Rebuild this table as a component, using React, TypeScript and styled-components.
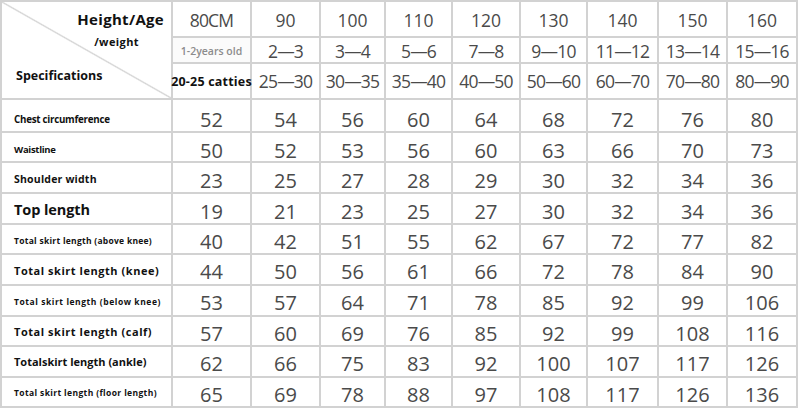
import React from "react";
import styled, { createGlobalStyle } from "styled-components";

const Global = createGlobalStyle`
  html, body { margin: 0; padding: 0; background: #ffffff; }
  body { width: 801px; height: 411px; overflow: hidden; }
`;

const LINE = "#d2d2d2";

const Grid = styled.div`
  display: grid;
  grid-template-columns: 169px 77px 67px 63px 65px 66px 65px 69px 67px 68px;
  grid-template-rows: 34px 24px 34px 31px 28px 29px 29px 28px 29px 29px 28px 29px 28px;
  gap: 2px;
  padding: 2px;
  width: max-content;
  background: ${LINE};
`;

const Corner = styled.div`
  grid-row: 1 / span 3;
  grid-column: 1;
  display: flex;
  flex-direction: column;
  font-family: "Open Sans", "Liberation Sans", sans-serif;
  font-weight: 700;
  color: #111;
  background: linear-gradient(
    to top right,
    #fff calc(50% - 1.3px),
    #d3d3d3 50%,
    #fff calc(50% + 1.3px)
  );
`;

const CornerText = styled.span<{ $size: number; $top: number; $align: "start" | "end"; $side: number; $ls?: number }>`
  font-size: ${(p) => p.$size}px;
  line-height: 1;
  margin-top: ${(p) => p.$top}px;
  align-self: ${(p) => (p.$align === "start" ? "flex-start" : "flex-end")};
  ${(p) => (p.$align === "start" ? `margin-left: ${p.$side}px;` : `margin-right: ${p.$side}px;`)}
  letter-spacing: ${(p) => p.$ls ?? 0}px;
  white-space: nowrap;
`;

const Cell = styled.div<{ $size: number; $shift?: number; $ls?: number }>`
  background: #fff;
  display: flex;
  align-items: center;
  justify-content: center;
  padding-top: ${(p) => p.$shift ?? 0}px;
  box-sizing: border-box;
  font-family: "Open Sans", "Liberation Sans", sans-serif;
  font-size: ${(p) => p.$size}px;
  letter-spacing: ${(p) => p.$ls ?? 0}px;
  color: #4a4a4a;
  white-space: nowrap;
`;

const AgeNote = styled(Cell)`
  font-weight: 600;
  color: #8c8c8c;
  background: #fbfbfb;
`;

const WeightNote = styled(Cell)`
  font-weight: 700;
  color: #111;
`;

const Label = styled.div<{ $size: number; $ls: number; $shift: number }>`
  background: #fff;
  display: flex;
  align-items: center;
  padding-left: 12px;
  padding-top: ${(p) => p.$shift}px;
  box-sizing: border-box;
  font-family: "Open Sans", "Liberation Sans", sans-serif;
  font-weight: 700;
  font-size: ${(p) => p.$size}px;
  letter-spacing: ${(p) => p.$ls}px;
  color: #111;
  white-space: nowrap;
`;

const heights = ["80CM", "90", "100", "110", "120", "130", "140", "150", "160"];
const ages = ["1-2years old", "2—3", "3—4", "5—6", "7—8", "9—10", "11—12", "13—14", "15—16"];
const weights = ["20-25 catties", "25—30", "30—35", "35—40", "40—50", "50—60", "60—70", "70—80", "80—90"];

type Row = { label: string; size: number; ls: number; shift: number; num: number; values: number[] };

const rows: Row[] = [
  { label: "Chest circumference", size: 9.8, ls: -0.27, shift: 7, num: 8, values: [52, 54, 56, 60, 64, 68, 72, 76, 80] },
  { label: "Waistline", size: 9.5, ls: -0.3, shift: 4, num: 6, values: [50, 52, 53, 56, 60, 63, 66, 70, 73] },
  { label: "Shoulder width", size: 10.5, ls: 0.2, shift: 3, num: 5, values: [23, 25, 27, 28, 29, 30, 32, 34, 36] },
  { label: "Top length", size: 14.5, ls: -0.1, shift: 2, num: 5, values: [19, 21, 23, 25, 27, 30, 32, 34, 36] },
  { label: "Total skirt length (above knee)", size: 8.5, ls: 0.27, shift: 2, num: 5, values: [40, 42, 51, 55, 62, 67, 72, 77, 82] },
  { label: "Total skirt length (knee)", size: 11, ls: 0.54, shift: 1, num: 4, values: [44, 50, 56, 61, 66, 72, 78, 84, 90] },
  { label: "Total skirt length (below knee)", size: 8.5, ls: 0.56, shift: 1, num: 4, values: [53, 57, 64, 71, 78, 85, 92, 99, 106] },
  { label: "Total skirt length (calf)", size: 11, ls: 0.54, shift: 1, num: 4, values: [57, 60, 69, 76, 85, 92, 99, 108, 116] },
  { label: "Totalskirt length (ankle)", size: 11, ls: 0, shift: 0, num: 4, values: [62, 66, 75, 83, 92, 100, 107, 117, 126] },
  { label: "Total skirt length (floor length)", size: 8.5, ls: 0.37, shift: 0, num: 4, values: [65, 69, 78, 88, 97, 108, 117, 126, 136] },
];

export default function App() {
  return (
    <>
      <Global />
      <Grid>
        <Corner>
          <CornerText $size={15} $top={10} $align="end" $side={7} $ls={0.3}>Height/Age</CornerText>
          <CornerText $size={11} $top={9} $align="end" $side={32} $ls={0.4}>/weight</CornerText>
          <CornerText $size={12.5} $top={23} $align="start" $side={14} $ls={0}>Specifications</CornerText>
        </Corner>
        {heights.map((h, i) => (
          <Cell key={"h" + i} $size={17.5} $shift={2} $ls={i === 0 ? -0.8 : 0}>{h}</Cell>
        ))}
        {ages.map((a, i) =>
          i === 0 ? (
            <AgeNote key={"a" + i} $size={10.5} $shift={1}>{a}</AgeNote>
          ) : (
            <Cell key={"a" + i} $size={17.5} $shift={1} $ls={-0.8}>{a}</Cell>
          )
        )}
        {weights.map((w, i) =>
          i === 0 ? (
            <WeightNote key={"w" + i} $size={12.5} $ls={0.2}>{w}</WeightNote>
          ) : (
            <Cell key={"w" + i} $size={17.5} $shift={0} $ls={-0.8}>{w}</Cell>
          )
        )}
        {rows.map((r) => (
          <React.Fragment key={r.label}>
            <Label $size={r.size} $ls={r.ls} $shift={r.shift}>{r.label}</Label>
            {r.values.map((v, j) => (
              <Cell key={j} $size={20} $shift={r.num}>{v}</Cell>
            ))}
          </React.Fragment>
        ))}
      </Grid>
    </>
  );
}
